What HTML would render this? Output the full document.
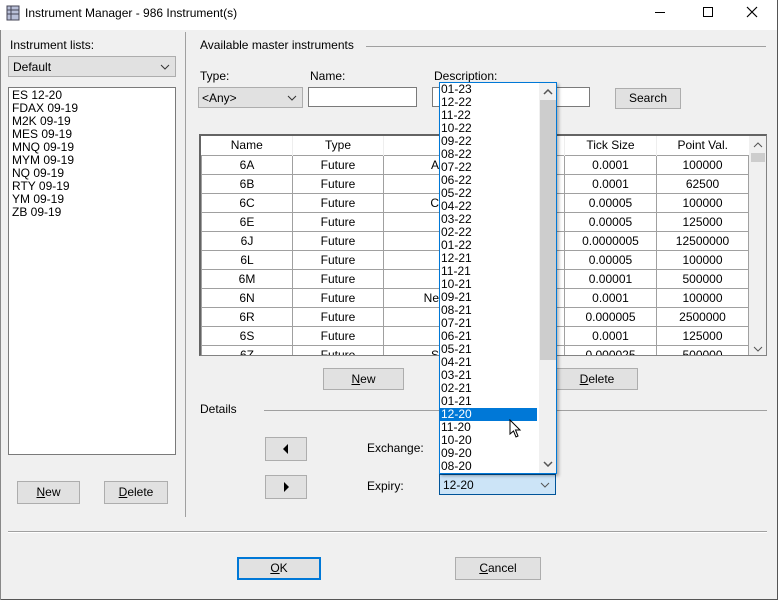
<!DOCTYPE html>
<html><head><style>
*{box-sizing:border-box;margin:0;padding:0}
body{width:778px;height:600px;background:#f0f0f0;font-family:"Liberation Sans",sans-serif;font-size:12px;color:#000;position:relative;overflow:hidden}
.a{position:absolute}
.btn{position:absolute;background:#e1e1e1;border:1px solid #adadad;text-align:center;font-size:12px}
.inp{position:absolute;background:#fff;border:1px solid #7a7a7a}
.hl{position:absolute;height:1px;background:#a0a0a0}
table{border-collapse:collapse}
td{border:1px solid #a0a0a0;height:19px;text-align:center;font-size:12px;padding:0}
.cv{position:absolute}
</style></head><body>
<div class="a" style="left:0;top:0;width:778px;height:30px;background:#fff"></div>
<svg class="a" style="left:5px;top:5px" width="16" height="16"><rect x="2" y="1" width="12" height="14" fill="#b8bfd8" stroke="#445"/><line x1="2" y1="5" x2="14" y2="5" stroke="#445"/><line x1="2" y1="9" x2="14" y2="9" stroke="#445"/><line x1="6" y1="1" x2="6" y2="15" stroke="#445"/></svg>
<div class="a" style="left:25px;top:6px;font-size:12px">Instrument Manager - 986 Instrument(s)</div>
<div class="a" style="left:655px;top:12px;width:10px;height:1px;background:#000"></div>
<div class="a" style="left:703px;top:7px;width:10px;height:10px;border:1px solid #000"></div>
<svg class="a" style="left:746px;top:6px" width="12" height="12"><path d="M1 1L11 11M11 1L1 11" stroke="#000" stroke-width="1.2"/></svg>
<div class="a" style="left:777px;top:0;width:1px;height:600px;background:#555"></div>
<div class="a" style="left:0;top:599px;width:778px;height:1px;background:#555"></div>
<div class="a" style="left:0;top:30px;width:1px;height:570px;background:#888"></div>

<div class="a" style="left:10px;top:38px">Instrument lists:</div>
<div class="a" style="left:8px;top:56px;width:168px;height:21px;background:#e1e1e1;border:1px solid #adadad;padding:3px 4px">Default<svg class="cv" style="right:5px;top:7px" width="10" height="6"><path d="M1 1L5 5L9 1" fill="none" stroke="#333"/></svg></div>
<div class="inp" style="left:8px;top:87px;width:168px;height:368px;padding:1px 3px;line-height:13px">ES 12-20<br>FDAX 09-19<br>M2K 09-19<br>MES 09-19<br>MNQ 09-19<br>MYM 09-19<br>NQ 09-19<br>RTY 09-19<br>YM 09-19<br>ZB 09-19</div>
<div class="btn" style="left:17px;top:481px;width:63px;height:23px;line-height:21px"><u>N</u>ew</div>
<div class="btn" style="left:104px;top:481px;width:64px;height:23px;line-height:21px"><u>D</u>elete</div>
<div class="a" style="left:185px;top:32px;width:1px;height:485px;background:#a0a0a0"></div>

<div class="a" style="left:200px;top:38px">Available master instruments</div>
<div class="hl" style="left:366px;top:46px;width:400px"></div>
<div class="a" style="left:200px;top:69px">Type:</div>
<div class="a" style="left:310px;top:69px">Name:</div>
<div class="a" style="left:434px;top:69px">Description:</div>
<div class="a" style="left:198px;top:87px;width:105px;height:21px;background:#e1e1e1;border:1px solid #adadad;padding:3px 3px">&lt;Any&gt;<svg class="cv" style="right:5px;top:7px" width="10" height="6"><path d="M1 1L5 5L9 1" fill="none" stroke="#333"/></svg></div>
<div class="inp" style="left:308px;top:87px;width:109px;height:20px"></div>
<div class="inp" style="left:432px;top:87px;width:158px;height:20px"></div>
<div class="btn" style="left:615px;top:88px;width:66px;height:21px;line-height:19px">Search</div>

<div class="a" style="left:199px;top:134px;width:568px;height:222px;background:#fff;border:1px solid #828282;border-left:2px solid #646464;border-top:2px solid #646464;overflow:hidden">
<table class="a" style="left:0;top:0;width:547px;table-layout:fixed">
<col style="width:91px"><col style="width:91px"><col style="width:181px"><col style="width:92px"><col style="width:92px">
<tr><td style="border:none;border-right:1px solid #eee">Name</td><td style="border:none;border-right:1px solid #eee">Type</td><td style="border:none;border-right:1px solid #eee"></td><td style="border:none;border-right:1px solid #eee">Tick Size</td><td style="border:none">Point Val.</td></tr>
<tr><td>6A</td><td>Future</td><td style="text-align:right;padding-right:125px">A</td><td>0.0001</td><td>100000</td></tr>
<tr><td>6B</td><td>Future</td><td></td><td>0.0001</td><td>62500</td></tr>
<tr><td>6C</td><td>Future</td><td style="text-align:right;padding-right:125px">C</td><td>0.00005</td><td>100000</td></tr>
<tr><td>6E</td><td>Future</td><td></td><td>0.00005</td><td>125000</td></tr>
<tr><td>6J</td><td>Future</td><td></td><td>0.0000005</td><td>12500000</td></tr>
<tr><td>6L</td><td>Future</td><td></td><td>0.00005</td><td>100000</td></tr>
<tr><td>6M</td><td>Future</td><td></td><td>0.00001</td><td>500000</td></tr>
<tr><td>6N</td><td>Future</td><td style="text-align:right;padding-right:125px">Ne</td><td>0.0001</td><td>100000</td></tr>
<tr><td>6R</td><td>Future</td><td></td><td>0.000005</td><td>2500000</td></tr>
<tr><td>6S</td><td>Future</td><td></td><td>0.0001</td><td>125000</td></tr>
<tr><td>6Z</td><td>Future</td><td style="text-align:right;padding-right:125px">S</td><td>0.000025</td><td>500000</td></tr>
</table>
<div class="a" style="left:548px;top:0;width:17px;height:220px;background:#f0f0f0"></div>
<svg class="cv" style="left:552px;top:6px" width="10" height="6"><path d="M1 5L5 1L9 5" fill="none" stroke="#555"/></svg>
<div class="a" style="left:550px;top:17px;width:14px;height:9px;background:#cdcdcd"></div>
<svg class="cv" style="left:552px;top:210px" width="10" height="6"><path d="M1 1L5 5L9 1" fill="none" stroke="#555"/></svg>
</div>

<div class="btn" style="left:323px;top:368px;width:81px;height:22px;line-height:20px"><u>N</u>ew</div>
<div class="btn" style="left:556px;top:368px;width:82px;height:22px;line-height:20px"><u>D</u>elete</div>
<div class="a" style="left:200px;top:402px">Details</div>
<div class="hl" style="left:264px;top:410px;width:503px"></div>
<div class="btn" style="left:265px;top:437px;width:42px;height:24px"><svg class="cv" style="left:17px;top:6px" width="6" height="10"><path d="M5 0L0 5L5 10Z" fill="#000"/></svg></div>
<div class="btn" style="left:265px;top:475px;width:42px;height:24px"><svg class="cv" style="left:18px;top:6px" width="6" height="10"><path d="M0 0L5 5L0 10Z" fill="#000"/></svg></div>
<div class="a" style="left:367px;top:441px">Exchange:</div>
<div class="a" style="left:367px;top:479px">Expiry:</div>
<div class="a" style="left:439px;top:474px;width:117px;height:21px;background:#cce4f7;border:1px solid #005499;padding:3px 3px">12-20<svg class="cv" style="right:5px;top:7px" width="10" height="6"><path d="M1 1L5 5L9 1" fill="none" stroke="#555"/></svg></div>

<div class="a" style="left:439px;top:82px;width:118px;height:392px;background:#fff;border:1px solid #0078d7;box-shadow:2px 2px 3px rgba(0,0,0,.3);overflow:hidden;line-height:13px">
<div style="padding-left:1px">01-23<br>12-22<br>11-22<br>10-22<br>09-22<br>08-22<br>07-22<br>06-22<br>05-22<br>04-22<br>03-22<br>02-22<br>01-22<br>12-21<br>11-21<br>10-21<br>09-21<br>08-21<br>07-21<br>06-21<br>05-21<br>04-21<br>03-21<br>02-21<br>01-21<br><div style="background:#0078d7;color:#fff;width:97px;margin-left:-1px;padding-left:1px">12-20</div>11-20<br>10-20<br>09-20<br>08-20</div>
<div class="a" style="left:99px;top:0;width:17px;height:390px;background:#f0f0f0"></div>
<div class="a" style="left:100px;top:17px;width:16px;height:260px;background:#cdcdcd"></div>
<svg class="cv" style="left:103px;top:6px" width="10" height="6"><path d="M1 5L5 1L9 5" fill="none" stroke="#555" stroke-width="1.5"/></svg>
<svg class="cv" style="left:103px;top:378px" width="10" height="6"><path d="M1 1L5 5L9 1" fill="none" stroke="#555" stroke-width="1.5"/></svg>
</div>
<svg class="a" style="left:509px;top:419px" width="14" height="20"><path d="M1 1 L1 15 L4.5 12 L7 18 L9 17 L6.5 11 L11 11 Z" fill="#fff" stroke="#000"/></svg>

<div class="hl" style="left:8px;top:531px;width:759px"></div>
<div class="a" style="left:8px;top:532px;width:759px;height:1px;background:#fff"></div>
<div class="btn" style="left:237px;top:557px;width:84px;height:23px;line-height:19px;border:2px solid #0078d7"><u>O</u>K</div>
<div class="btn" style="left:455px;top:557px;width:86px;height:23px;line-height:21px"><u>C</u>ancel</div>
</body></html>
